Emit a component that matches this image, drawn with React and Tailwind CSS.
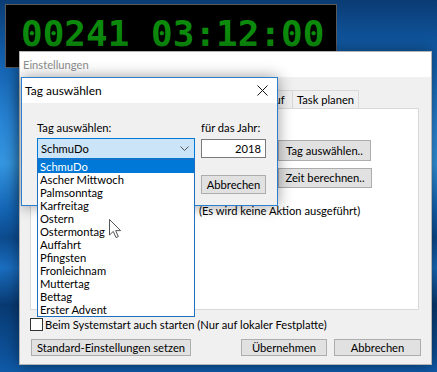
import { useState } from "react";

const days = [
	"SchmuDo",
	"Ascher Mittwoch",
	"Palmsonntag",
	"Karfreitag",
	"Ostern",
	"Ostermontag",
	"Auffahrt",
	"Pfingsten",
	"Fronleichnam",
	"Muttertag",
	"Bettag",
	"Erster Advent",
];

// first tabs sit under the dialog, only "Ablauf" and "Task planen" show
const tabs = [
	{ label: "", w: "w-[214px]" },
	{ label: "Ablauf", w: "w-[48px]" },
	{ label: "Task planen", w: "w-[67px]" },
];

const btn =
	"flex items-center justify-center whitespace-nowrap bg-[#e1e1e1] border border-[#adadad] text-black";

const App = () => {
	const [selected] = useState(0);

	return (
		<div className="relative w-[437px] h-[372px] overflow-hidden bg-[linear-gradient(180deg,#0a3b73_0%,#1260ae_16%,#2a86d6_34%,#3596e0_44%,#1566b6_56%,#0c4b8e_64%,#1a6dbf_72%,#083a72_82%,#0f5aa8_100%)] font-['Lato',sans-serif] text-[11.2px] leading-[14px] text-black">
			{/* Timer */}
			<div className="absolute left-[5px] top-[4px] w-[332px] h-[64px] bg-black border border-[#5a5a5a] pl-[15px] pt-[9px]">
				<span className="font-['DejaVu_Sans_Mono',monospace] font-bold text-[36px] leading-[40px] text-[#0c8a0c]">
					00241 03:12:00
				</span>
			</div>

			{/* Einstellungen */}
			<div className="absolute left-[19px] top-[51px] w-[413px] h-[314px] flex flex-col bg-[#f0f0f0] border border-[#b4b4b4] shadow-[0_0_14px_rgba(0,0,0,0.45)]">
				<div className="h-[25px] shrink-0 bg-white flex items-center pl-[3px] text-[#8c8c8c]">
					Einstellungen
				</div>
				<div className="flex flex-col pt-[13px] pl-[10px] pr-[10px]">
					<div className="flex h-[18px]">
						{tabs.map((t, i) => (
							<div
								key={i}
								className={`${t.w} h-[18px] flex items-center justify-center whitespace-nowrap border-t border-l last:border-r border-[#d9d9d9] bg-[#f0f0f0]`}
							>
								{t.label}
							</div>
						))}
					</div>
					<div className="h-[202px] mr-[2px] bg-white border border-[#d9d9d9] flex flex-col pt-[31px]">
						<div className={`${btn} ml-[247px] w-[93px] h-[21px]`}>
							Tag auswählen..
						</div>
						<div className={`${btn} ml-[247px] mt-[7px] w-[94px] h-[20px]`}>
							Zeit berechnen..
						</div>
						<div className="ml-[168px] mt-[16px] whitespace-nowrap">
							(Es wird keine Aktion ausgeführt)
						</div>
					</div>

					{/* Checkbox */}
					<div className="flex items-center gap-[2px] mt-[8px] h-[13px]">
						<div className="w-[13px] h-[13px] bg-white border border-[#333]" />
						<span className="whitespace-nowrap">
							Beim Systemstart auch starten (Nur auf lokaler Festplatte)
						</span>
					</div>

					{/* Buttons */}
					<div className="flex mt-[8px]">
						<div className={`${btn} ml-[1px] w-[160px] h-[17px]`}>
							Standard-Einstellungen setzen
						</div>
						<div className={`${btn} ml-auto w-[86px] h-[17px]`}>Übernehmen</div>
						<div className={`${btn} ml-[7px] w-[87px] h-[17px]`}>Abbrechen</div>
					</div>
				</div>
			</div>

			{/* Tag auswählen dialog */}
			<div className="absolute left-[21px] top-[77px] w-[257px] h-[129px] flex flex-col bg-[#f0f0f0] border border-[#2b7fd0] shadow-[0_0_14px_rgba(0,0,0,0.4)]">
				<div className="h-[25px] shrink-0 bg-white flex items-center justify-between pl-[3px] pr-[9px] text-[12px]">
					<span>Tag auswählen</span>
					<svg width="11" height="11" viewBox="0 0 11 11">
						<path d="M0.5 0.5L10.5 10.5M10.5 0.5L0.5 10.5" stroke="#111" strokeWidth="1" />
					</svg>
				</div>
				<div className="flex gap-[6px] pl-[15px] pt-[18px]">
					<div className="w-[158px] flex flex-col">
						<div className="h-[15px] mb-[2px]">Tag auswählen:</div>
						<div className="h-[21px] flex items-center justify-between pl-[3px] pr-[5px] bg-[#cce4f7] border border-[#0078d7]">
							<span>SchmuDo</span>
							<svg width="9" height="5" viewBox="0 0 9 5">
								<path d="M0.5 0.5L4.5 4.5L8.5 0.5" fill="none" stroke="#555" strokeWidth="1" />
							</svg>
						</div>
						<div className={`${btn} ml-[80px] mt-[16px] w-[65px] h-[19px]`}>OK</div>
					</div>
					<div className="w-[65px] flex flex-col">
						<div className="h-[15px] whitespace-nowrap">für das Jahr:</div>
						<div className="mt-[3px] h-[19px] bg-white border border-[#7a7a7a] flex items-center justify-end pr-[4px]">
							2018
						</div>
						<div className={`${btn} mt-[17px] h-[19px]`}>Abbrechen</div>
					</div>
				</div>
			</div>

			{/* Dropdown list */}
			<div className="absolute left-[37px] top-[159px] w-[158px] flex flex-col bg-white border border-[#1e6fc0]">
				{days.map((d, i) => (
					<div
						key={d}
						className={`h-[13px] leading-[13px] pl-[2px] overflow-hidden ${
							i === selected ? "bg-[#0078d7] text-white" : "text-black"
						}`}
					>
						{d}
					</div>
				))}
			</div>

			{/* Mouse cursor */}
			<svg
				className="absolute left-[109px] top-[219px]"
				width="13"
				height="20"
				viewBox="0 0 13 20"
			>
				<path
					d="M0.5 0.5L0.5 16L4.3 12.4L7 18.6L9.3 17.6L6.7 11.6L11.6 11.6Z"
					fill="#fff"
					stroke="#555"
					strokeWidth="1"
					strokeLinejoin="round"
				/>
			</svg>
		</div>
	);
};

export default App;
